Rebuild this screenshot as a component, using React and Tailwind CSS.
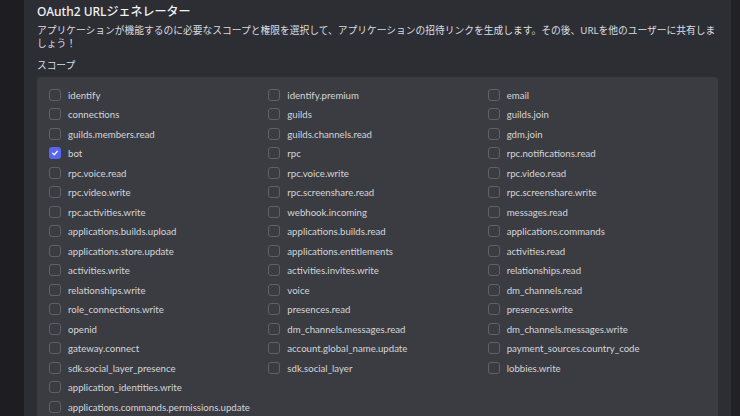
import React from "react";

const rows = [
  ["identify", "identify.premium", "email"],
  ["connections", "guilds", "guilds.join"],
  ["guilds.members.read", "guilds.channels.read", "gdm.join"],
  ["bot", "rpc", "rpc.notifications.read"],
  ["rpc.voice.read", "rpc.voice.write", "rpc.video.read"],
  ["rpc.video.write", "rpc.screenshare.read", "rpc.screenshare.write"],
  ["rpc.activities.write", "webhook.incoming", "messages.read"],
  ["applications.builds.upload", "applications.builds.read", "applications.commands"],
  ["applications.store.update", "applications.entitlements", "activities.read"],
  ["activities.write", "activities.invites.write", "relationships.read"],
  ["relationships.write", "voice", "dm_channels.read"],
  ["role_connections.write", "presences.read", "presences.write"],
  ["openid", "dm_channels.messages.read", "dm_channels.messages.write"],
  ["gateway.connect", "account.global_name.update", "payment_sources.country_code"],
  ["sdk.social_layer_presence", "sdk.social_layer", "lobbies.write"],
  ["application_identities.write"],
  ["applications.commands.permissions.update"],
];

function Item({ label }) {
  const checked = label === "bot";
  return (
    <div className="flex items-center h-[19.5px]">
      {checked ? (
        <div className="w-[12px] h-[12px] rounded-[3px] bg-[#5865f2] flex items-center justify-center">
          <svg width="8" height="8" viewBox="0 0 10 10" fill="none">
            <path d="M2 5.2 L4.1 7.2 L8 2.8" stroke="white" strokeWidth="1.5" strokeLinecap="round" strokeLinejoin="round" />
          </svg>
        </div>
      ) : (
        <div className="w-[12px] h-[12px] rounded-[3px] border border-[#606167]" />
      )}
      <span
        className="ml-[7px] text-[9.65px] text-[#d4d6da] whitespace-nowrap"
        style={{ fontFamily: "Lato, sans-serif" }}
      >
        {label}
      </span>
    </div>
  );
}

export default function App() {
  const items = rows.flatMap((r) => [r[0] ?? null, r[1] ?? null, r[2] ?? null]);
  return (
    <div
      className="w-[740px] h-[416px] flex overflow-hidden bg-[#2d2e33]"
      style={{ fontFamily: '"Noto Sans", "Noto Sans CJK JP", sans-serif' }}
    >
      <div className="w-[24px] shrink-0 bg-[#1e1e22]" />
      <div className="flex-1 px-[13px] pt-[4px] flex flex-col">
        <div className="text-[12px] leading-[16px] text-[#f2f3f5] font-medium">OAuth2 URLジェネレーター</div>
        <div className="mt-[3.5px] text-[9.75px] leading-[13px] text-[#dbdee1]">
          アプリケーションが機能するのに必要なスコープと権限を選択して、アプリケーションの招待リンクを生成します。その後、URLを他のユーザーに共有しま
          <br />
          しょう！
        </div>
        <div className="mt-[9px] text-[9.7px] leading-[13px] text-[#dbdee1]">スコープ</div>
        <div className="mt-[5.5px] flex-1 bg-[#3b3c41] rounded-t-[3px] pl-[12px] pr-[11px] pt-[8px]">
          <div className="grid grid-cols-3">
            {items.map((it, i) => (it ? <Item key={i} label={it} /> : <div key={i} />))}
          </div>
        </div>
      </div>
      <div className="w-[9px] shrink-0 bg-[#222226]" />
    </div>
  );
}
